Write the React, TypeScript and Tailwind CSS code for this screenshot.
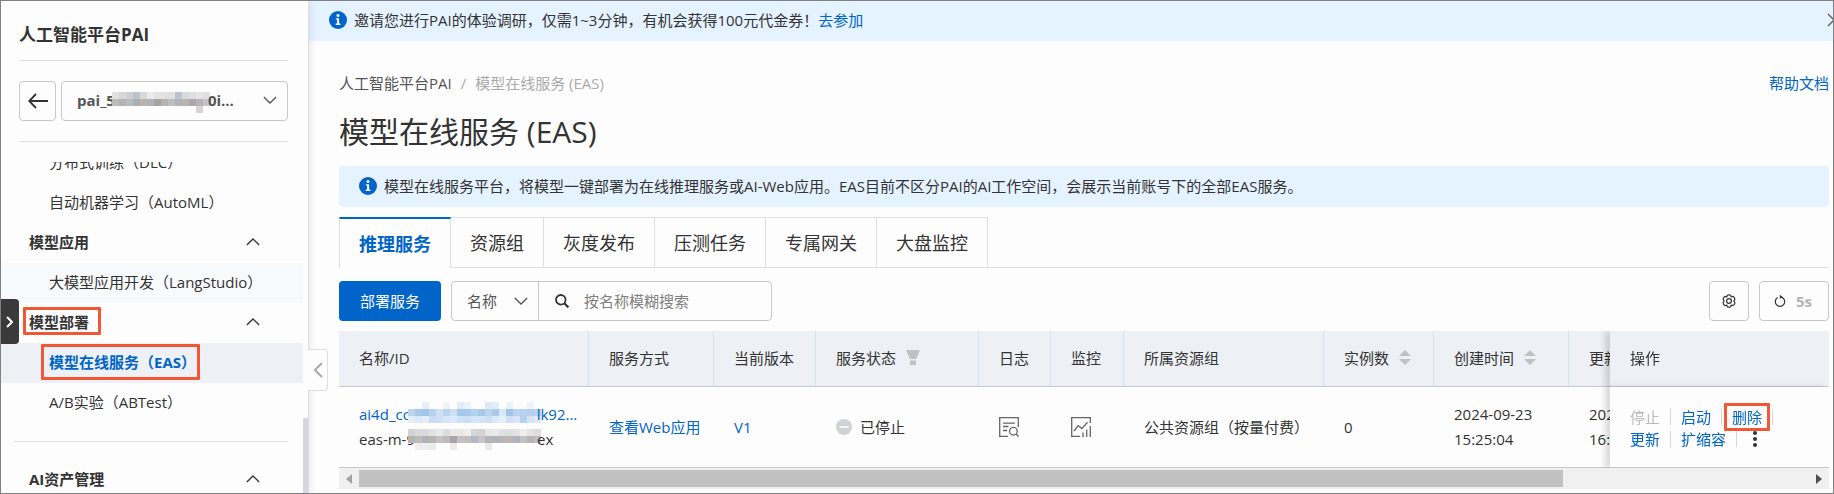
import { clsx } from 'clsx';
import type { ReactNode } from 'react';

// Masked parts of account names, one colour per block ('' = empty)
const WORKSPACE_MASK = [
  ['#e3e1e0', '#d6d7d9', '#cdd1d6', '#bcc3cd', '#d9d9d9', '#ebebec', '#e7e3df', '#e2e2e2', '#dfe0e1', '#bdc3ce', '#d9dadb', '#dfdfe3', '#e3e5e8', '#e2e0df'],
  ['#bcbcbd', '#b4b3b5', '#b9bcc0', '#adb0b3', '#bdb3ac', '#afb4bb', '#a6a4a2', '#b6b4b3', '#bcc0c3', '#b0b3b8', '#bdb3ad', '#a8a9ae', '#bbb4b6', '#c4c3c6'],
  ['', '', '', '', '', '', '', '', '', '', '', '', '#d6d4d5', ''],
];
const NAME_MASK = [
  ['', '', '#e6effa', '', '', '#eef3fa', '', '#e2edf9', '#eaf2fb', '', '', '#dce9f8', '#e2edf9', '', '#eaf2fb', '', '', '#eef3fa', ''],
  ['#bcd6ee', '#a9c9e9', '#a6c4e8', '#b8d2ee', '#cfe1f4', '#bdd4ee', '#cde0f4', '#a7c8ea', '#a9c8e9', '#b0d3ef', '#a8c9ea', '#bdd3ee', '#aacaea', '#d8e9f6', '#a4c3e8', '#bcd2ee', '#b9d2ee', '#b6cfec', '#b9d3ee'],
  ['#e3eef9', '#dce9f8', '#e3eef9', '#c9dcf3', '#cfe0f4', '#d8e7f7', '#dce9f8', '#cfe1f4', '#cbdff4', '#d5e6f7', '#d3e4f6', '#cfe0f4', '#dceaf8', '#e3f1f9', '#d0e1f4', '#d7e5f6', '#b3d2f0', '#d5e5f7', '#dfebf8'],
];
const ID_MASK = [
  ['#d3d3d4', '#dadada', '#dadada', '#e2e2e3', '#e9e9ea', '#dddddf', '#e8e9eb', '#e9e6e4', '#f2edeb', '#d3d7d9', '#d6d3cf', '#e6e7e9', '#e9e9ea', '#dfe0e3', '#e0e0e1', '#e4e4e4', '#eeeeef', '#e4e4e4', '#dcdcdc'],
  ['#b5b4b5', '#bcbcbd', '#b3b1b5', '#b6b6b9', '#c6c1c0', '#bcbbbf', '#a8a4aa', '#c3c2c2', '#c7beb8', '#b2b9c8', '#c9c5c2', '#b5b4ba', '#b3b2b6', '#b9b6bb', '#beb6b0', '#acb5c0', '#c4c2c1', '#b9b5b3', '#c0c0c0'],
  ['', '#f1ece9', '#edeef1', '#ecebeb', '', '', '#ecebec', '', '', '', '', '#e9e9ea', '', '', '', '', '', '', ''],
];

const TABS = ['推理服务', '资源组', '灰度发布', '压测任务', '专属网关', '大盘监控'];

function Mask({ rows, className }: { rows: string[][]; className?: string }) {
  const width = rows[0].length * 7;
  return (
    <svg
      width={width}
      height={rows.length * 7}
      className={clsx('shrink-0', className)}
      shapeRendering="crispEdges"
      aria-hidden="true">
      {rows.map((row, y) =>
        row.map((fill, x) =>
          fill ? (
            <rect key={`${x}-${y}`} x={x * 7} y={y * 7} width="7" height="7" fill={fill} />
          ) : null,
        ),
      )}
    </svg>
  );
}

function Chevron({
  dir,
  className,
}: {
  dir: 'up' | 'down' | 'left' | 'right';
  className?: string;
}) {
  const d = {
    up: 'M1 8 L8 1 L15 8',
    down: 'M1 1 L8 8 L15 1',
    left: 'M8 1 L1 8 L8 15',
    right: 'M1 1 L6 6 L1 11',
  }[dir];
  const box = {
    up: '0 0 16 9',
    down: '0 0 16 9',
    left: '0 0 9 16',
    right: '0 0 7 12',
  }[dir];
  return (
    <svg viewBox={box} className={className} fill="none" stroke="currentColor" aria-hidden="true">
      <path d={d} strokeWidth={dir === 'left' || dir === 'right' ? 2 : 1.5} />
    </svg>
  );
}

function InfoIcon() {
  return (
    <svg viewBox="0 0 18 18" className="h-[18px] w-[18px] shrink-0" aria-hidden="true">
      <circle cx="9" cy="9" r="9" fill="#0064c8" />
      <circle cx="9" cy="4.4" r="1.5" fill="#fff" />
      <path d="M6.8 7.2h3.3v5.4h1.3v1.4H6.7v-1.4h1.4V8.6H6.8z" fill="#fff" />
    </svg>
  );
}

function SortIcon() {
  return (
    <svg viewBox="0 0 12 15" className="h-[15px] w-3" fill="#c1c1c1" aria-hidden="true">
      <path d="M6 0 L12 6 H0z M6 15 L12 9 H0z" />
    </svg>
  );
}

function Marked({ children, className }: { children: ReactNode; className: string }) {
  return (
    <span className="relative">
      {children}
      <span className={clsx('absolute rounded-[1px] border-[3px] border-[#f25735]', className)} />
    </span>
  );
}

function NavGroup({ children }: { children: ReactNode }) {
  return (
    <button
      type="button"
      className="flex h-10 w-full shrink-0 items-center justify-between pr-12 pb-0.5 pl-7 font-bold">
      <span className="leading-5">{children}</span>
      <Chevron dir="up" className="h-2 w-[14px]" />
    </button>
  );
}

function NavItem({ children, className }: { children: ReactNode; className?: string }) {
  return (
    <a
      href="#"
      className={clsx('mr-[5px] flex h-10 shrink-0 items-center pb-0.5 pl-12 leading-5', className)}>
      {children}
    </a>
  );
}

function Sidebar() {
  return (
    <aside className="relative z-10 flex w-[308px] shrink-0 flex-col border-r border-[#dedede] bg-[#fdfdfd] shadow-[2px_0_6px_rgba(0,0,0,0.08)]">
      <div className="mr-5 ml-[18px] flex h-[60px] shrink-0 items-center border-b border-[#dedede] pt-2">
        <h2 className="text-[17px] leading-6 font-bold">人工智能平台PAI</h2>
      </div>
      <div className="mr-5 ml-[18px] flex shrink-0 gap-[5px] border-b border-[#dedede] py-5">
        <button
          type="button"
          aria-label="返回"
          className="flex h-10 w-[37px] items-center justify-center rounded-sm border border-[#c8c8c8]">
          <svg viewBox="0 0 20 16" className="h-4 w-5" fill="none" stroke="#333" strokeWidth="1.8" aria-hidden="true">
            <path d="M20 8H1.5M8 1L1.2 8L8 15" />
          </svg>
        </button>
        <button
          type="button"
          aria-haspopup="listbox"
          className="flex h-10 flex-1 items-center rounded-sm border border-[#c8c8c8] pr-[10px] pb-0.5 pl-[15px] font-bold text-[#555]">
          pai_5
          <Mask rows={WORKSPACE_MASK} className="mt-1 -mr-0.5 -ml-[3px]" />
          0i...
          <Chevron dir="down" className="ml-auto h-2 w-[14px]" />
        </button>
      </div>
      <nav className="mt-5 flex min-h-0 flex-1 flex-col overflow-hidden">
        <NavItem className="-mt-[19px]">分布式训练（DLC）</NavItem>
        <NavItem>自动机器学习（AutoML）</NavItem>
        <NavGroup>模型应用</NavGroup>
        <NavItem className="bg-[#f8f9fb]">大模型应用开发（LangStudio）</NavItem>
        <NavGroup>
          <Marked className="-top-[5px] -right-3 -bottom-[3px] -left-1.5">模型部署</Marked>
        </NavGroup>
        <NavItem className="bg-[#edf0f5] font-bold text-[#0064c8]">
          <Marked className="-inset-y-2 -right-1 -left-2">模型在线服务（EAS）</Marked>
        </NavItem>
        <NavItem>A/B实验（ABTest）</NavItem>
        <hr className="mr-5 ml-[13px] my-[18px] shrink-0 border-[#dedede]" />
        <NavGroup>AI资产管理</NavGroup>
      </nav>
      <span className="absolute right-0 bottom-0 h-[75px] w-[5px] bg-[#d4d7e2]" />
      <button
        type="button"
        aria-label="展开菜单"
        className="absolute top-[298px] left-0 flex h-[45px] w-[18px] items-center justify-center rounded-r bg-[#3a3a3a] pr-0.5 text-white">
        <Chevron dir="right" className="h-3 w-[7px]" />
      </button>
      <button
        type="button"
        aria-label="收起侧栏"
        className="absolute top-[348px] left-full flex h-[42px] w-5 items-center justify-center rounded-r-sm border border-l-0 border-[#dedede] bg-[#fdfdfd] pl-0.5 text-[#aaa]">
        <Chevron dir="left" className="h-4 w-[9px]" />
      </button>
    </aside>
  );
}

function Toolbar() {
  return (
    <div className="mt-[13px] flex items-center">
      <button type="button" className="h-10 rounded-sm bg-[#0064c8] px-[21px] text-white">
        部署服务
      </button>
      <div className="ml-[10px] flex h-10 rounded-sm border border-[#c8c8c8]">
        <label className="relative flex w-[87px] items-center border-r border-[#c8c8c8] text-[#555]">
          <select aria-label="搜索字段" className="h-full w-full appearance-none bg-transparent pl-[15px]">
            <option>名称</option>
          </select>
          <Chevron dir="down" className="pointer-events-none absolute right-[10px] h-2 w-[14px]" />
        </label>
        <label className="flex w-[232px] items-center">
          <svg viewBox="0 0 14 14" className="ml-4 h-[14px] w-[14px]" fill="none" stroke="#333" aria-hidden="true">
            <circle cx="5.8" cy="5.8" r="4.8" strokeWidth="1.8" />
            <path d="M9.3 9.3L13.4 13.4" strokeWidth="2.2" />
          </svg>
          <input
            type="text"
            aria-label="搜索"
            placeholder="按名称模糊搜索"
            className="ml-[15px] w-40 bg-transparent outline-none placeholder:text-[#808080]"
          />
        </label>
      </div>
      <button
        type="button"
        aria-label="设置"
        className="ml-auto flex h-10 w-10 items-center justify-center rounded-sm border border-[#c8c8c8]">
        <svg viewBox="0 0 14 14" className="h-[14px] w-[14px]" fill="none" stroke="#333" strokeWidth="1.2" aria-hidden="true">
          <path d="M5.3 1.3 Q7 0.3 8.7 1.3 L9.2 2.8 L11.2 2.5 Q12.9 3.6 12.9 5.3 L11.9 7 L12.9 8.7 Q12.9 10.4 11.2 11.5 L9.2 11.2 L8.7 12.7 Q7 13.7 5.3 12.7 L4.8 11.2 L2.8 11.5 Q1.1 10.4 1.1 8.7 L2.1 7 L1.1 5.3 Q1.1 3.6 2.8 2.5 L4.8 2.8z" />
          <circle cx="7" cy="7" r="2.4" />
        </svg>
      </button>
      <button
        type="button"
        className="ml-[10px] flex h-10 w-[70px] items-center justify-between rounded-sm border border-[#c8c8c8] pr-4 pl-[14px] font-bold text-[#b3b3b3]">
        <svg viewBox="0 0 12 14" className="h-[14px] w-3" fill="none" aria-hidden="true">
          <path d="M3.6 3.6 A4.7 4.7 0 1 0 8.4 3.6 L6.6 3" stroke="#333" strokeWidth="1.2" />
          <path d="M5.8 0.8 L9 3.3 L5.8 4.8z" fill="#333" />
        </svg>
        5s
      </button>
    </div>
  );
}

function Th({ children, className }: { children?: ReactNode; className?: string }) {
  return (
    <th
      className={clsx(
        'h-14 border-b border-[#c8c8c8] bg-[#edf0f5] px-5 pb-0.5 text-left font-normal whitespace-nowrap',
        className ?? 'border-r border-r-[#d3e1f2]',
      )}>
      <span className="flex items-center gap-[10px]">{children}</span>
    </th>
  );
}

function Td({ children, className }: { children?: ReactNode; className?: string }) {
  return (
    <td className={clsx('h-[81px] border-b border-[#c8c8c8] px-5 leading-[25px] whitespace-nowrap', className)}>
      {children}
    </td>
  );
}

const Divider = () => <span className="mx-[10px] h-4 w-px bg-[#d5d5d5]" />;

const STICKY =
  'sticky right-0 shadow-[-5px_0_6px_rgba(0,0,0,0.14)]';

function ServiceTable() {
  return (
    <div className="mt-[10px]">
      <div className="overflow-hidden">
        <table className="w-full min-w-[1800px] table-fixed border-separate border-spacing-0">
          <colgroup>
            <col className="w-[250px]" />
            <col className="w-[125px]" />
            <col className="w-[102px]" />
            <col className="w-[163px]" />
            <col className="w-[72px]" />
            <col className="w-[73px]" />
            <col className="w-[200px]" />
            <col className="w-[110px]" />
            <col className="w-[135px]" />
            <col />
            <col className="w-[219px]" />
          </colgroup>
          <thead>
            <tr>
              <Th>名称/ID</Th>
              <Th>服务方式</Th>
              <Th>当前版本</Th>
              <Th>
                服务状态
                <svg viewBox="0 0 14 15" className="h-[15px] w-[14px]" fill="#c1c1c1" aria-hidden="true">
                  <path d="M0 0h14L10 9H4zM4 10.5h6V15H4z" />
                </svg>
              </Th>
              <Th>日志</Th>
              <Th>监控</Th>
              <Th>所属资源组</Th>
              <Th>
                实例数
                <SortIcon />
              </Th>
              <Th>
                创建时间
                <SortIcon />
              </Th>
              <Th>更新时间</Th>
              <Th className={STICKY}>操作</Th>
            </tr>
          </thead>
          <tbody>
            <tr>
              <Td>
                <a href="#" className="flex h-[25px] items-center text-[#0064c8]">
                  ai4d_co
                  <Mask rows={NAME_MASK} className="-mt-1 -mr-1 -ml-1" />
                  lk92...
                </a>
                <span className="flex h-[25px] items-center">
                  eas-m-9
                  <Mask rows={ID_MASK} className="-mr-1 -ml-[7px]" />
                  ex
                </span>
              </Td>
              <Td>
                <a href="#" className="text-[#0064c8]">查看Web应用</a>
              </Td>
              <Td>
                <a href="#" className="text-[#0064c8]">V1</a>
              </Td>
              <Td>
                <span className="flex items-center gap-2">
                  <svg viewBox="0 0 16 16" className="h-4 w-4" aria-hidden="true">
                    <circle cx="8" cy="8" r="8" fill="#d0d2d6" />
                    <path d="M3.5 7.2h9v1.6h-9z" fill="#fff" />
                  </svg>
                  已停止
                </span>
              </Td>
              <Td>
                <button type="button" aria-label="查看日志" className="block">
                  <svg viewBox="0 0 20 20" className="h-5 w-5" fill="none" stroke="#666" strokeWidth="1.3" aria-hidden="true">
                    <path d="M9 19.3H0.7V0.7H19.3V10M4 6.2H16M4 9.5H9.5M4 13.5H8" />
                    <circle cx="14.4" cy="14.2" r="3.8" />
                    <path d="M17 17L19.6 19.6" />
                  </svg>
                </button>
              </Td>
              <Td>
                <button type="button" aria-label="查看监控" className="block">
                  <svg viewBox="0 0 20 20" className="h-5 w-5" fill="none" stroke="#666" strokeWidth="1.3" aria-hidden="true">
                    <path d="M9 19.3H0.7V0.7H19.3V6M19.3 9V20M3 14L7.2 8.6L10.8 11.6L16.5 5.2M12 15.5V20M15.7 12.5V20" />
                  </svg>
                </button>
              </Td>
              <Td>公共资源组（按量付费）</Td>
              <Td>0</Td>
              <Td>
                2024-09-23
                <br />
                15:25:04
              </Td>
              <Td>
                2024-09-23
                <br />
                16:25:04
              </Td>
              <Td className={clsx(STICKY, 'bg-[#fdfdfd] pt-0.5')}>
                <div className="flex h-[22px] items-center leading-[22px]">
                  <button type="button" disabled className="text-[#bbb]">停止</button>
                  <Divider />
                  <button type="button" className="text-[#0064c8]">启动</button>
                  <Divider />
                  <button type="button" className="text-[#0064c8]">
                    <Marked className="-inset-y-1 -right-2 -left-2">删除</Marked>
                  </button>
                  <Divider />
                </div>
                <div className="flex h-[22px] items-center leading-[22px]">
                  <button type="button" className="text-[#0064c8]">更新</button>
                  <Divider />
                  <button type="button" className="text-[#0064c8]">扩缩容</button>
                  <Divider />
                  <button type="button" aria-label="更多" className="ml-1.5">
                    <svg viewBox="0 0 4 16" className="h-4 w-1" fill="#333" aria-hidden="true">
                      <circle cx="2" cy="2" r="2" />
                      <circle cx="2" cy="8" r="2" />
                      <circle cx="2" cy="14" r="2" />
                    </svg>
                  </button>
                </div>
              </Td>
            </tr>
          </tbody>
        </table>
      </div>
      <div className="flex h-[21px] items-center bg-[#f0f0f0]">
        <svg viewBox="0 0 6 10" className="mx-[7px] h-[10px] w-[6px]" fill="#a3a3a3" aria-hidden="true">
          <path d="M6 0v10L0 5z" />
        </svg>
        <div className="flex-1">
          <div className="h-[17px] w-[83%] bg-[#c1c1c1]" />
        </div>
        <svg viewBox="0 0 6 10" className="mx-[7px] h-[10px] w-[6px]" fill="#505050" aria-hidden="true">
          <path d="M0 0v10L6 5z" />
        </svg>
      </div>
    </div>
  );
}

export default function App() {
  return (
    <div className="flex h-screen overflow-hidden border border-[#808080] bg-[#fdfdfd] font-['Open_Sans','Noto_Sans_CJK_SC',sans-serif] text-[15px] leading-5 text-[#333]">
      <Sidebar />
      <main className="min-w-0 flex-1">
        <div className="flex h-10 items-center gap-[7px] overflow-hidden bg-[#e5f2ff] pb-0.5 pl-5 whitespace-nowrap">
          <InfoIcon />
          <p>
            邀请您进行PAI的体验调研，仅需1~3分钟，有机会获得100元代金券！
            <a href="#" className="text-[#0064c8]">去参加</a>
          </p>
          <button type="button" aria-label="关闭" className="-mr-2 ml-auto shrink-0">
            <svg viewBox="0 0 14 14" className="h-[14px] w-[14px]" fill="none" stroke="#666" strokeWidth="1.5" aria-hidden="true">
              <path d="M1 1L13 13M13 1L1 13" />
            </svg>
          </button>
        </div>
        <div className="pr-1 pl-[30px]">
          <div className="mt-8 flex justify-between">
            <div className="flex text-[#555]">
              <a href="#">人工智能平台PAI</a>
              <span className="mx-[9px] text-[#aaa]">/</span>
              <span className="text-[#aaa]">模型在线服务 (EAS)</span>
            </div>
            <a href="#" className="text-[#0064c8]">帮助文档</a>
          </div>
          <h1 className="mt-[19px] text-[30px] leading-10">
            模型在线服务 <span className="font-medium">(EAS)</span>
          </h1>
          <div className="mt-[14px] flex h-[41px] items-center gap-[7px] rounded-sm bg-[#e5f2ff] px-5 pb-0.5">
            <InfoIcon />
            模型在线服务平台，将模型一键部署为在线推理服务或AI-Web应用。EAS目前不区分PAI的AI工作空间，会展示当前账号下的全部EAS服务。
          </div>
          <div role="tablist" className="mt-[10px] flex text-lg">
            {TABS.map((tab, i) => (
              <button
                key={tab}
                type="button"
                role="tab"
                aria-selected={i === 0}
                className={clsx(
                  'h-[51px] border-r border-[#dedede] px-[19px]',
                  i === 0
                    ? 'border-t-2 border-l border-t-[#0064c8] font-bold text-[#0064c8]'
                    : 'border-t border-b',
                )}>
                {tab}
              </button>
            ))}
            <div className="flex-1 border-b border-[#dedede]" />
          </div>
          <Toolbar />
          <ServiceTable />
        </div>
      </main>
    </div>
  );
}
